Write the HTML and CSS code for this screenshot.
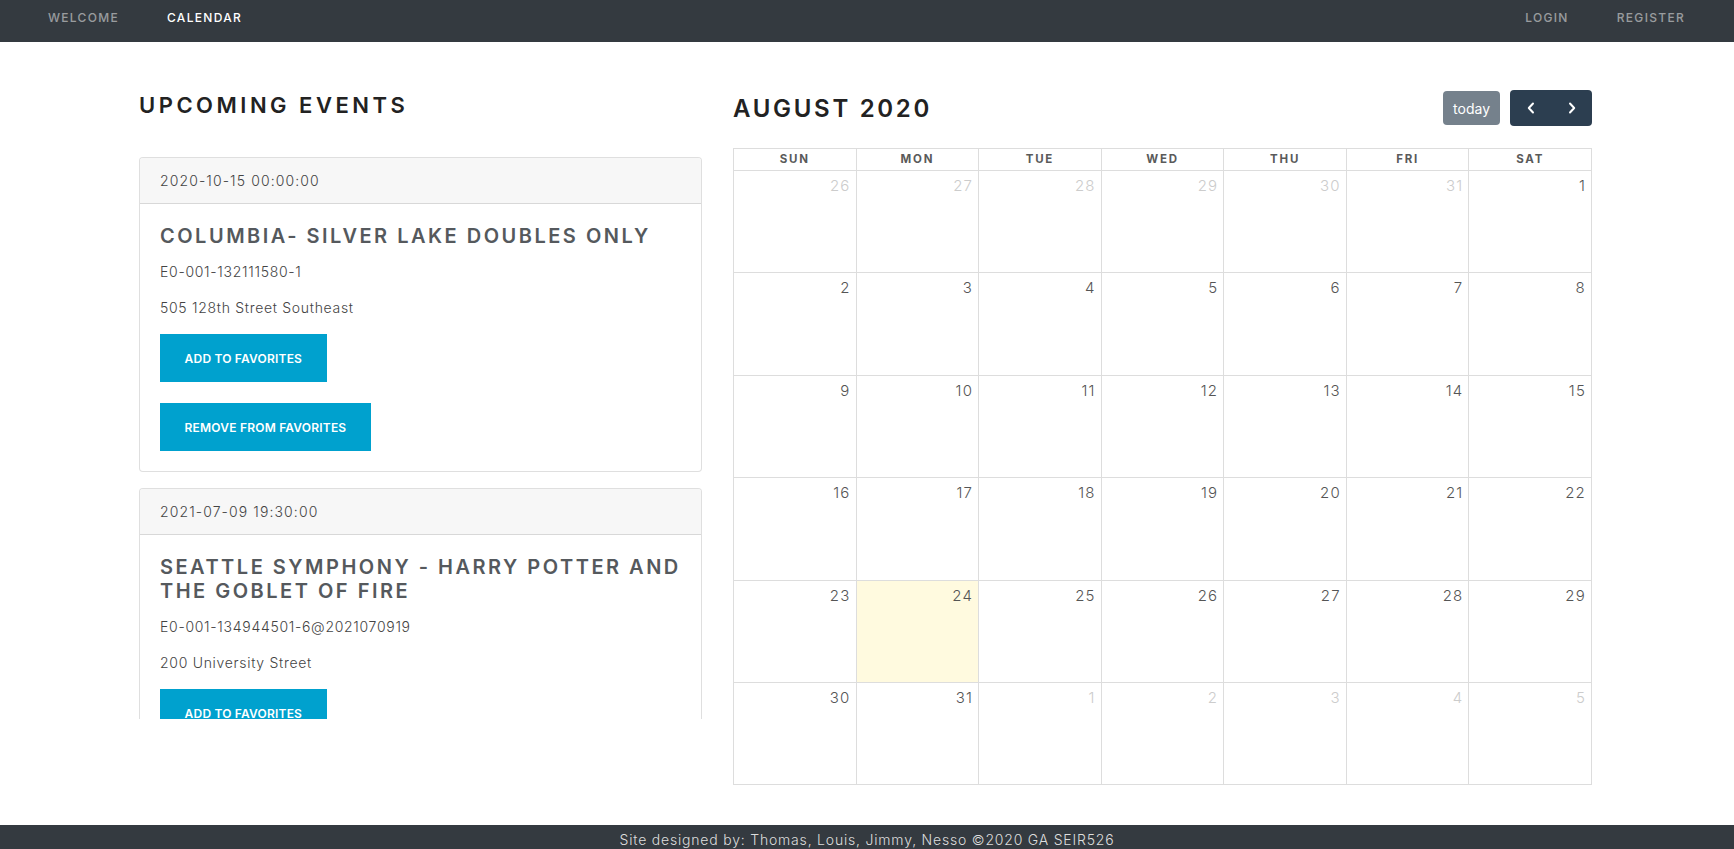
FILE: index.html
```html
<!DOCTYPE html>
<html lang="en">
<head>
<meta charset="utf-8">
<title>Calendar</title>
<link rel="stylesheet" href="styles.css">
</head>
<body>
<nav class="topnav">
  <div class="nav-group">
    <a class="nav-link" href="#">WELCOME</a>
    <a class="nav-link active" href="#">CALENDAR</a>
  </div>
  <div class="nav-group">
    <a class="nav-link" href="#">LOGIN</a>
    <a class="nav-link" href="#">REGISTER</a>
  </div>
</nav>

<main class="page">
  <section class="events">
    <h2 class="section-title">UPCOMING EVENTS</h2>
    <div class="event-list">
      <article class="card">
        <div class="card-header">2020-10-15 00:00:00</div>
        <div class="card-body">
          <h5 class="card-title">COLUMBIA- SILVER LAKE DOUBLES ONLY</h5>
          <p class="card-text">E0-001-132111580-1</p>
          <p class="card-text addr">505 128th Street Southeast</p>
          <button class="btn-fav">ADD TO FAVORITES</button>
          <button class="btn-fav second">REMOVE FROM FAVORITES</button>
        </div>
      </article>
      <article class="card">
        <div class="card-header">2021-07-09 19:30:00</div>
        <div class="card-body">
          <h5 class="card-title">SEATTLE SYMPHONY - HARRY POTTER AND THE GOBLET OF FIRE</h5>
          <p class="card-text">E0-001-134944501-6@2021070919</p>
          <p class="card-text addr">200 University Street</p>
          <button class="btn-fav">ADD TO FAVORITES</button>
          <button class="btn-fav second">REMOVE FROM FAVORITES</button>
        </div>
      </article>
    </div>
  </section>

  <section class="calendar">
    <div class="cal-toolbar">
      <h2 class="cal-title">AUGUST 2020</h2>
      <div class="cal-buttons">
        <button class="btn-today">today</button>
        <div class="btn-group">
          <button class="btn-nav" aria-label="prev">
            <svg width="8" height="12" viewBox="0 0 8 12"><path d="M6 1.5 L1.8 6 L6 10.5" fill="none" stroke="#fff" stroke-width="2" stroke-linecap="round" stroke-linejoin="round"/></svg>
          </button>
          <button class="btn-nav" aria-label="next">
            <svg width="8" height="12" viewBox="0 0 8 12"><path d="M2 1.5 L6.2 6 L2 10.5" fill="none" stroke="#fff" stroke-width="2" stroke-linecap="round" stroke-linejoin="round"/></svg>
          </button>
        </div>
      </div>
    </div>

    <div class="cal-grid">
      <div class="dow">SUN</div><div class="dow">MON</div><div class="dow">TUE</div><div class="dow">WED</div><div class="dow">THU</div><div class="dow">FRI</div><div class="dow">SAT</div>

      <div class="day other">26</div><div class="day other">27</div><div class="day other">28</div><div class="day other">29</div><div class="day other">30</div><div class="day other">31</div><div class="day">1</div>
      <div class="day">2</div><div class="day">3</div><div class="day">4</div><div class="day">5</div><div class="day">6</div><div class="day">7</div><div class="day">8</div>
      <div class="day">9</div><div class="day">10</div><div class="day">11</div><div class="day">12</div><div class="day">13</div><div class="day">14</div><div class="day">15</div>
      <div class="day">16</div><div class="day">17</div><div class="day">18</div><div class="day">19</div><div class="day">20</div><div class="day">21</div><div class="day">22</div>
      <div class="day">23</div><div class="day today">24</div><div class="day">25</div><div class="day">26</div><div class="day">27</div><div class="day">28</div><div class="day">29</div>
      <div class="day">30</div><div class="day">31</div><div class="day other">1</div><div class="day other">2</div><div class="day other">3</div><div class="day other">4</div><div class="day other">5</div>
    </div>
  </section>
</main>

<footer class="site-footer">Site designed by: Thomas, Louis, Jimmy, Nesso ©2020 GA SEIR526</footer>
</body>
</html>
```

FILE: styles.css
```css
* { box-sizing: border-box; }

html, body {
  margin: 0;
  padding: 0;
  height: 849px;
  overflow: hidden;
}

body {
  font-family: "Inter", "Noto Sans", sans-serif;
  color: #555;
  background: #fff;
}

/* ---------- top nav ---------- */
.topnav {
  height: 42px;
  background: #343a40;
  display: flex;
  justify-content: space-between;
  align-items: flex-start;
  padding: 9px 49px 0 48px;
}

.nav-group {
  display: flex;
  gap: 48px;
}

.nav-link {
  font-size: 12px;
  line-height: 18px;
  font-weight: 500;
  letter-spacing: 1.3px;
  color: rgba(255, 255, 255, 0.5);
  text-decoration: none;
}

.nav-link.active {
  color: #fff;
}

/* ---------- page ---------- */
.page {
  padding: 48px 142px 40px 139px;
  display: grid;
  grid-template-columns: 563px 859px;
  column-gap: 31px;
  align-items: start;
}

.section-title {
  margin: 0 0 37px;
  font-size: 22px;
  line-height: 30px;
  font-weight: 600;
  letter-spacing: 3.5px;
  color: #222;
}

.event-list {
  height: 562px;
  overflow-y: auto;
  scrollbar-width: none;
}

.event-list::-webkit-scrollbar { display: none; }

.card {
  border: 1px solid rgba(0, 0, 0, 0.125);
  border-radius: 4px;
  margin-bottom: 16px;
  background: #fff;
}

.card-header {
  background: #f7f7f7;
  border-bottom: 1px solid rgba(0, 0, 0, 0.125);
  border-radius: 3px 3px 0 0;
  padding: 12px 20px;
  font-size: 14px;
  line-height: 21px;
  font-weight: 300;
  letter-spacing: 1.1px;
  color: #444;
}

.card-body {
  padding: 20px;
}

.card-title {
  margin: 0 0 13px;
  font-size: 20px;
  line-height: 24px;
  font-weight: 600;
  letter-spacing: 2.5px;
  color: #55595d;
}

.card-text {
  margin: 0 0 15px;
  font-size: 14px;
  line-height: 21px;
  font-weight: 300;
  letter-spacing: 0.7px;
  color: #444;
}

.card-text.addr {
  margin-bottom: 16px;
}

.btn-fav {
  display: block;
  height: 48px;
  padding: 0 24.6px;
  border: 0;
  border-radius: 0;
  background: #00a1ce;
  color: #fff;
  font-family: "Inter", "Noto Sans", sans-serif;
  font-size: 12px;
  font-weight: 600;
  letter-spacing: 0.2px;
  cursor: pointer;
}

.btn-fav.second {
  margin-top: 21px;
}

/* ---------- calendar ---------- */
.cal-toolbar {
  height: 36px;
  margin-bottom: 22px;
  display: flex;
  justify-content: space-between;
  align-items: center;
}

.cal-title {
  margin: 0;
  font-size: 24px;
  line-height: 36px;
  font-weight: 600;
  letter-spacing: 2.7px;
  color: #222;
  position: relative;
  top: 1px;
}

.cal-buttons {
  display: flex;
  align-items: center;
  gap: 10px;
}

.btn-today {
  height: 34px;
  padding: 0 10px;
  border: 0;
  border-radius: 4px;
  background: #2c3e50;
  opacity: 0.65;
  color: #fff;
  font-family: "Inter", "Noto Sans", sans-serif;
  font-size: 14px;
  font-weight: 400;
}

.btn-group {
  display: flex;
  border-radius: 4px;
  overflow: hidden;
}

.btn-nav {
  width: 41px;
  height: 36px;
  border: 0;
  background: #2c3e50;
  display: flex;
  align-items: center;
  justify-content: center;
  padding: 0;
}

.cal-grid {
  display: grid;
  grid-template-columns: repeat(7, 1fr);
  grid-template-rows: 22px;
  grid-auto-rows: 102.4px;
  border-top: 1px solid #ddd;
  border-left: 1px solid #ddd;
}

.dow {
  border-right: 1px solid #ddd;
  border-bottom: 1px solid #ddd;
  text-align: center;
  font-size: 11.5px;
  line-height: 21px;
  font-weight: 700;
  letter-spacing: 1.8px;
  color: #5a5a5a;
}

.day {
  border-right: 1px solid #ddd;
  border-bottom: 1px solid #ddd;
  text-align: right;
  padding: 4px 5px 0 0;
  font-size: 15px;
  line-height: 22px;
  font-weight: 300;
  letter-spacing: 1.2px;
  color: #555;
}

.day.other {
  color: #ccc;
}

.day.today {
  background: rgba(255, 220, 40, 0.15);
}

/* ---------- footer ---------- */
.site-footer {
  height: 24px;
  overflow: hidden;
  background: #343a40;
  color: #ddd;
  text-align: center;
  padding-top: 5px;
  font-size: 14px;
  line-height: 20px;
  font-weight: 300;
  letter-spacing: 0.8px;
}
```
